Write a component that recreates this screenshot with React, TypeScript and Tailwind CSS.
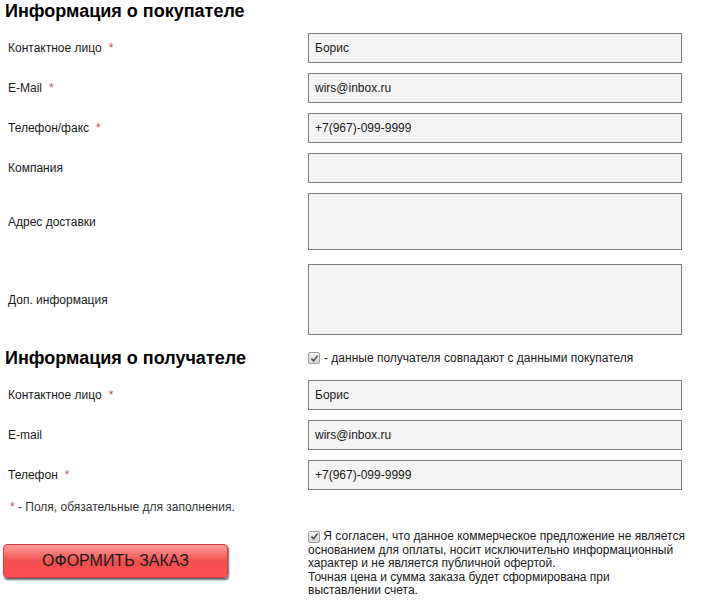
const buyer = [
  { label: 'Контактное лицо', required: true, value: 'Борис', h: 'h-[30px]' },
  { label: 'E-Mail', required: true, value: 'wirs@inbox.ru', h: 'h-[30px]' },
  { label: 'Телефон/факс', required: true, value: '+7(967)-099-9999', h: 'h-[30px]' },
  { label: 'Компания', required: false, value: '', h: 'h-[30px]' },
]

const recipient = [
  { label: 'Контактное лицо', required: true, value: 'Борис' },
  { label: 'E-mail', required: false, value: 'wirs@inbox.ru' },
  { label: 'Телефон', required: true, value: '+7(967)-099-9999' },
]

function Star() {
  return <span className="ml-[7px] text-[#e0454f]">*</span>
}

function Check() {
  return (
    <span className="inline-flex h-[12px] w-[12px] shrink-0 items-center justify-center rounded-[2px] border border-[#a0a0a0] bg-gradient-to-b from-[#f4f4f4] to-[#d6d6d6] align-middle">
      <svg viewBox="0 0 10 10" className="h-[9px] w-[9px]">
        <path d="M1.5 5.2 L4 7.6 L8.6 1.8" fill="none" stroke="#555" strokeWidth="1.8" />
      </svg>
    </span>
  )
}

function Field({ value, h = 'h-[30px]' }: { value: string; h?: string }) {
  return (
    <div className={`${h} w-[374px] border border-[#7d7d7d] bg-[#f4f4f4] px-[6px] pt-[7px] text-[12px] leading-[14px] text-[#1a1a1a]`}>
      {value}
    </div>
  )
}

export default function App() {
  return (
    <div className="w-[707px] h-[610px] bg-white text-[12px] text-[#1a1a1a]" style={{ fontFamily: '"Liberation Sans", Arial, sans-serif' }}>
      <h2 className="pl-[5px] text-[18px] font-bold leading-[22px] text-black">Информация о покупателе</h2>

      <div className="mt-[11px] flex flex-col gap-[10px]">
        {buyer.map((row) => (
          <div key={row.label} className="flex items-center">
            <div className="w-[308px] pl-[8px]">
              {row.label}
              {row.required && <Star />}
            </div>
            <Field value={row.value} h={row.h} />
          </div>
        ))}
        <div className="flex items-center">
          <div className="w-[308px] pl-[8px]">Адрес доставки</div>
          <Field value="" h="h-[57px]" />
        </div>
        <div className="mt-[4px] flex items-center">
          <div className="w-[308px] pl-[8px]">Доп. информация</div>
          <Field value="" h="h-[71px]" />
        </div>
      </div>

      <div className="mt-[12px] flex items-center">
        <h2 className="w-[308px] pl-[5px] text-[18px] font-bold leading-[22px] text-black">Информация о получателе</h2>
        <div className="flex items-center gap-[4px]">
          <Check />
          <span>- данные получателя совпадают с данными покупателя</span>
        </div>
      </div>

      <div className="mt-[11px] flex flex-col gap-[10px]">
        {recipient.map((row) => (
          <div key={row.label} className="flex items-center">
            <div className="w-[308px] pl-[8px]">
              {row.label}
              {row.required && <Star />}
            </div>
            <Field value={row.value} />
          </div>
        ))}
      </div>

      <div className="mt-[10px] pl-[10px] text-[12px] leading-[15px] text-[#333]">
        <span className="text-[#e0454f]">*</span> - Поля, обязательные для заполнения.
      </div>

      <div className="mt-[9px] flex">
        <div className="w-[308px] pl-[3px] pt-[20px]">
          <button className="h-[34px] w-[225px] rounded-[4px] border border-[#d23c3c] bg-gradient-to-b from-[#ff9a9a] via-[#f04f4f] to-[#ff5050] text-[16px] text-[#1a1a1a] shadow-[1px_2px_2px_rgba(0,0,0,0.6)]">
            ОФОРМИТЬ ЗАКАЗ
          </button>
        </div>
        <div className="w-[384px] pt-[6px] text-[12px] leading-[13.5px] text-[#1a1a1a]">
          <Check /> Я согласен, что данное коммерческое предложение не является основанием для оплаты, носит исключительно информационный характер и не является публичной офертой.
          <br />
          Точная цена и сумма заказа будет сформирована при
          <br />
          выставлении счета.
        </div>
      </div>
    </div>
  )
}
